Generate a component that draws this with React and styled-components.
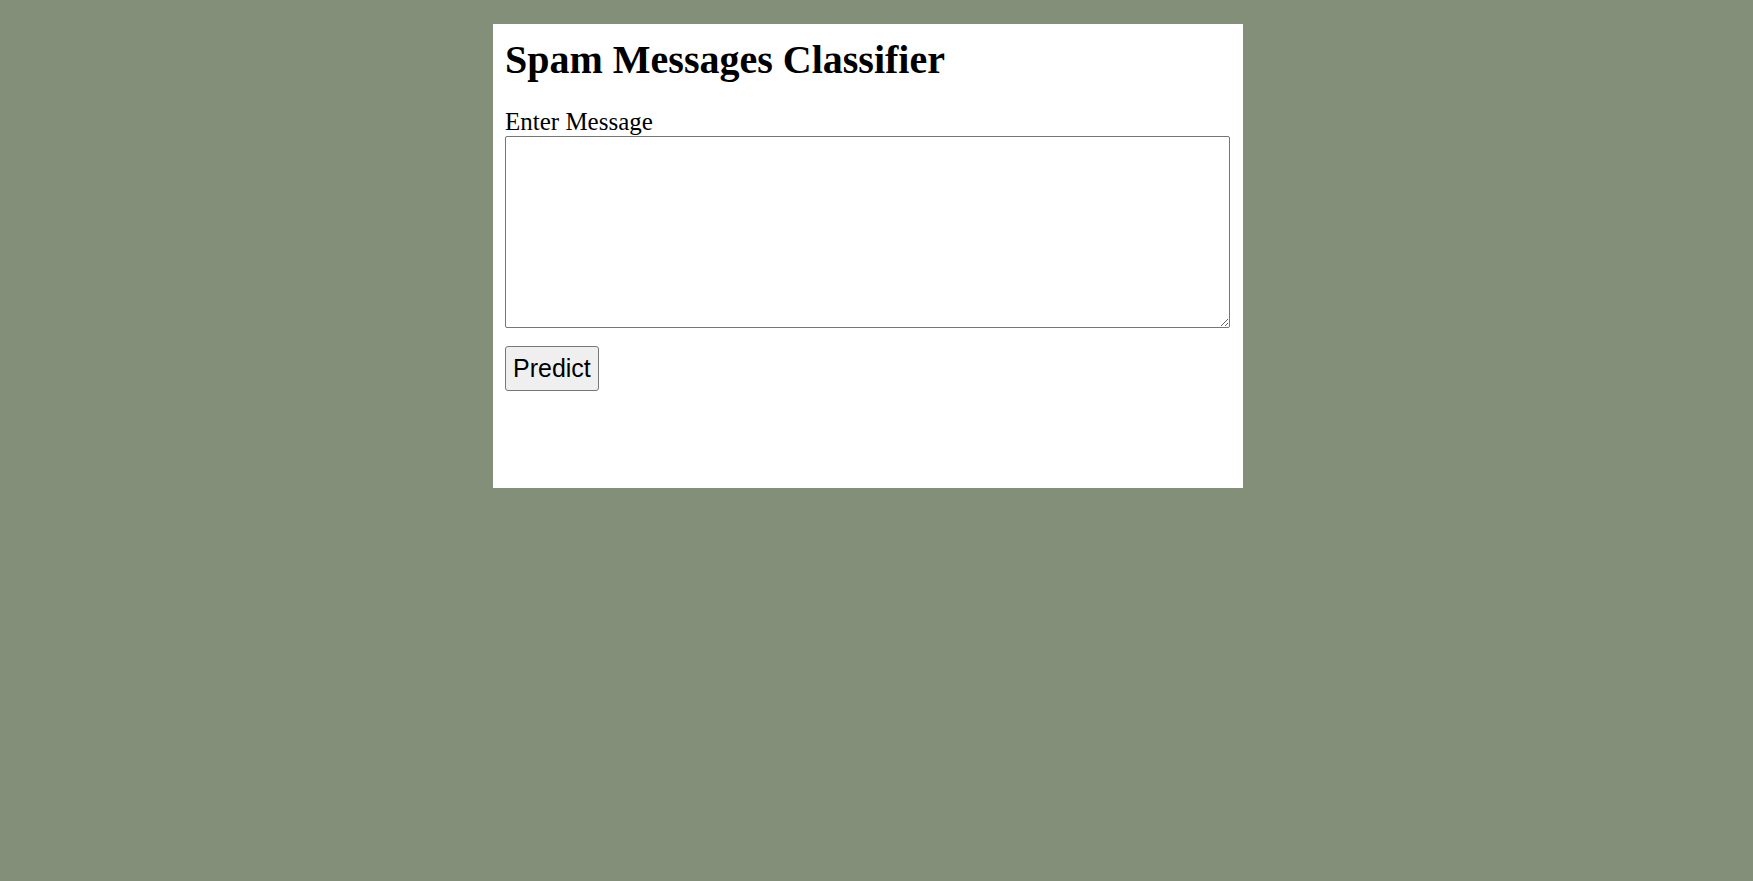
import React from 'react';
import styled, { createGlobalStyle } from 'styled-components';

const GlobalStyle = createGlobalStyle`
  body {
    margin: 8px;
    background-color: #848f79;
    font-family: 'Liberation Serif', 'Times New Roman', serif;
  }
`;

const Page = styled.main`
  display: flex;
  padding: 16px 0 0 485px;
`;

const Card = styled.div`
  width: 750px;
  height: 464px;
  box-sizing: border-box;
  background: #ffffff;
  padding: 12px 13px 12px 12px;
  display: flex;
  flex-direction: column;
  align-items: flex-start;
`;

const Title = styled.h1`
  font-family: 'Liberation Serif', 'Times New Roman', serif;
  font-size: 40px;
  font-weight: 700;
  line-height: 1.107;
  color: #000;
  margin: 2px 0 26px;
`;

const Label = styled.label`
  display: block;
  font-size: 25px;
  line-height: 1.107;
  color: #000;
`;

const MessageBox = styled.textarea`
  width: 725px;
  height: 192px;
  box-sizing: border-box;
  margin: 0;
  border: 1px solid #767676;
  border-radius: 2px;
  background: #fff;
`;

const Button = styled.button`
  margin-top: 18px;
  font-family: 'Liberation Sans', Arial, sans-serif;
  font-size: 25px;
  line-height: 1.15;
  padding: 7px 7px;
  color: #000;
  background: #efefef;
  border: 1px solid #767676;
  border-radius: 3px;
  cursor: pointer;
`;

const App = () => {
  return (
    <>
      <GlobalStyle />
      <Page>
        <Card>
          <Title>Spam Messages Classifier</Title>
          <Label htmlFor="message">Enter Message</Label>
          <MessageBox id="message" />
          <Button type="button">Predict</Button>
        </Card>
      </Page>
    </>
  );
};

export default App;
